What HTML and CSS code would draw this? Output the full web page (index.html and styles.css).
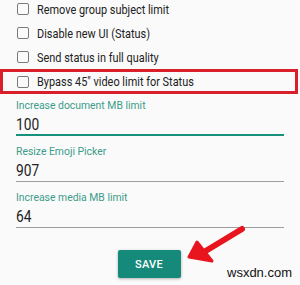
FILE: index.html
```html
<!DOCTYPE html>
<html>
<head>
<meta charset="utf-8">
<link rel="stylesheet" href="styles.css">
</head>
<body>
<div class="page">
  <div class="checks">
    <div class="row"><span class="box"></span><span class="txt">Remove group subject limit</span></div>
    <div class="row"><span class="box"></span><span class="txt">Disable new UI (Status)</span></div>
    <div class="row"><span class="box"></span><span class="txt">Send status in full quality</span></div>
    <div class="row hl"><span class="box"></span><span class="txt">Bypass 45" video limit for Status</span></div>
  </div>
  <div class="fields">
    <div class="field">
      <div class="label">Increase document MB limit</div>
      <div class="value active"><span class="num">100</span></div>
    </div>
    <div class="field">
      <div class="label">Resize Emoji Picker</div>
      <div class="value"><span class="num">907</span></div>
    </div>
    <div class="field">
      <div class="label">Increase media MB limit</div>
      <div class="value"><span class="num">64</span></div>
    </div>
  </div>
  <div class="actions">
    <button class="save">SAVE</button>
  </div>
  <svg class="arrow" width="70" height="50" viewBox="0 0 70 50">
    <path d="M60 4 L22 27" stroke="#e8141e" stroke-width="6" stroke-linecap="round" fill="none"/>
    <path d="M7 32 L15 17 L30 36 Z" fill="#e8141e" stroke="#e8141e" stroke-width="3" stroke-linejoin="round"/>
  </svg>
  <div class="wm">wsxdn.com</div>
</div>
</body>
</html>
```
FILE: styles.css
```css
html, body {
  margin: 0;
  padding: 0;
  background: #fafafa;
}
body {
  width: 300px;
  height: 285px;
  overflow: hidden;
  font-family: Roboto, "Liberation Sans", sans-serif;
}
.page {
  position: relative;
  width: 300px;
  height: 285px;
}
.checks {
  margin-top: -3px;
  display: flex;
  flex-direction: column;
}
.row {
  height: 24px;
  display: flex;
  align-items: center;
  padding-left: 17px;
  box-sizing: border-box;
}
.row.hl {
  width: 298px;
  height: 25px;
  border: 3px solid #d9202a;
  padding-left: 14px;
}
.box {
  width: 10px;
  height: 10px;
  border: 1.5px solid #7a7a7a;
  border-radius: 2px;
  flex: none;
}
.txt {
  display: inline-block;
  margin-left: 8px;
  font-size: 13px;
  color: #222;
  white-space: nowrap;
  transform: scaleX(0.84);
  transform-origin: left center;
}
.fields {
  margin-top: 4px;
  padding: 0 16px;
  display: flex;
  flex-direction: column;
}
.field {
  height: 46px;
  display: flex;
  flex-direction: column;
}
.label {
  font-size: 10.4px;
  color: #3b9c8a;
  line-height: 12px;
  margin-top: 2px;
  white-space: nowrap;
}
.value {
  font-size: 16px;
  color: #222;
  line-height: 20px;
  height: 20px;
  padding-top: 3px;
  border-bottom: 1px solid #9e9e9e;
}
.num {
  display: inline-block;
  transform: scaleX(0.86);
  transform-origin: left center;
}
.value.active {
  border-bottom: 2px solid #17907c;
  height: 19px;
}
.actions {
  display: flex;
  justify-content: center;
  padding-top: 14px;
  padding-right: 2px;
}
.save {
  width: 63px;
  height: 28px;
  border: none;
  border-radius: 2px;
  background: #15897a;
  color: #fff;
  font-family: Roboto, "Liberation Sans", sans-serif;
  font-size: 11px;
  font-weight: 500;
  letter-spacing: 0.3px;
  box-shadow: 0 1px 3px rgba(0,0,0,0.3);
  padding: 0;
}
.arrow {
  position: absolute;
  left: 182px;
  top: 228px;
}
.wm {
  position: absolute;
  left: 227px;
  top: 268px;
  font-family: "Liberation Sans", Arial, sans-serif;
  font-size: 13px;
  color: #111;
}
```
